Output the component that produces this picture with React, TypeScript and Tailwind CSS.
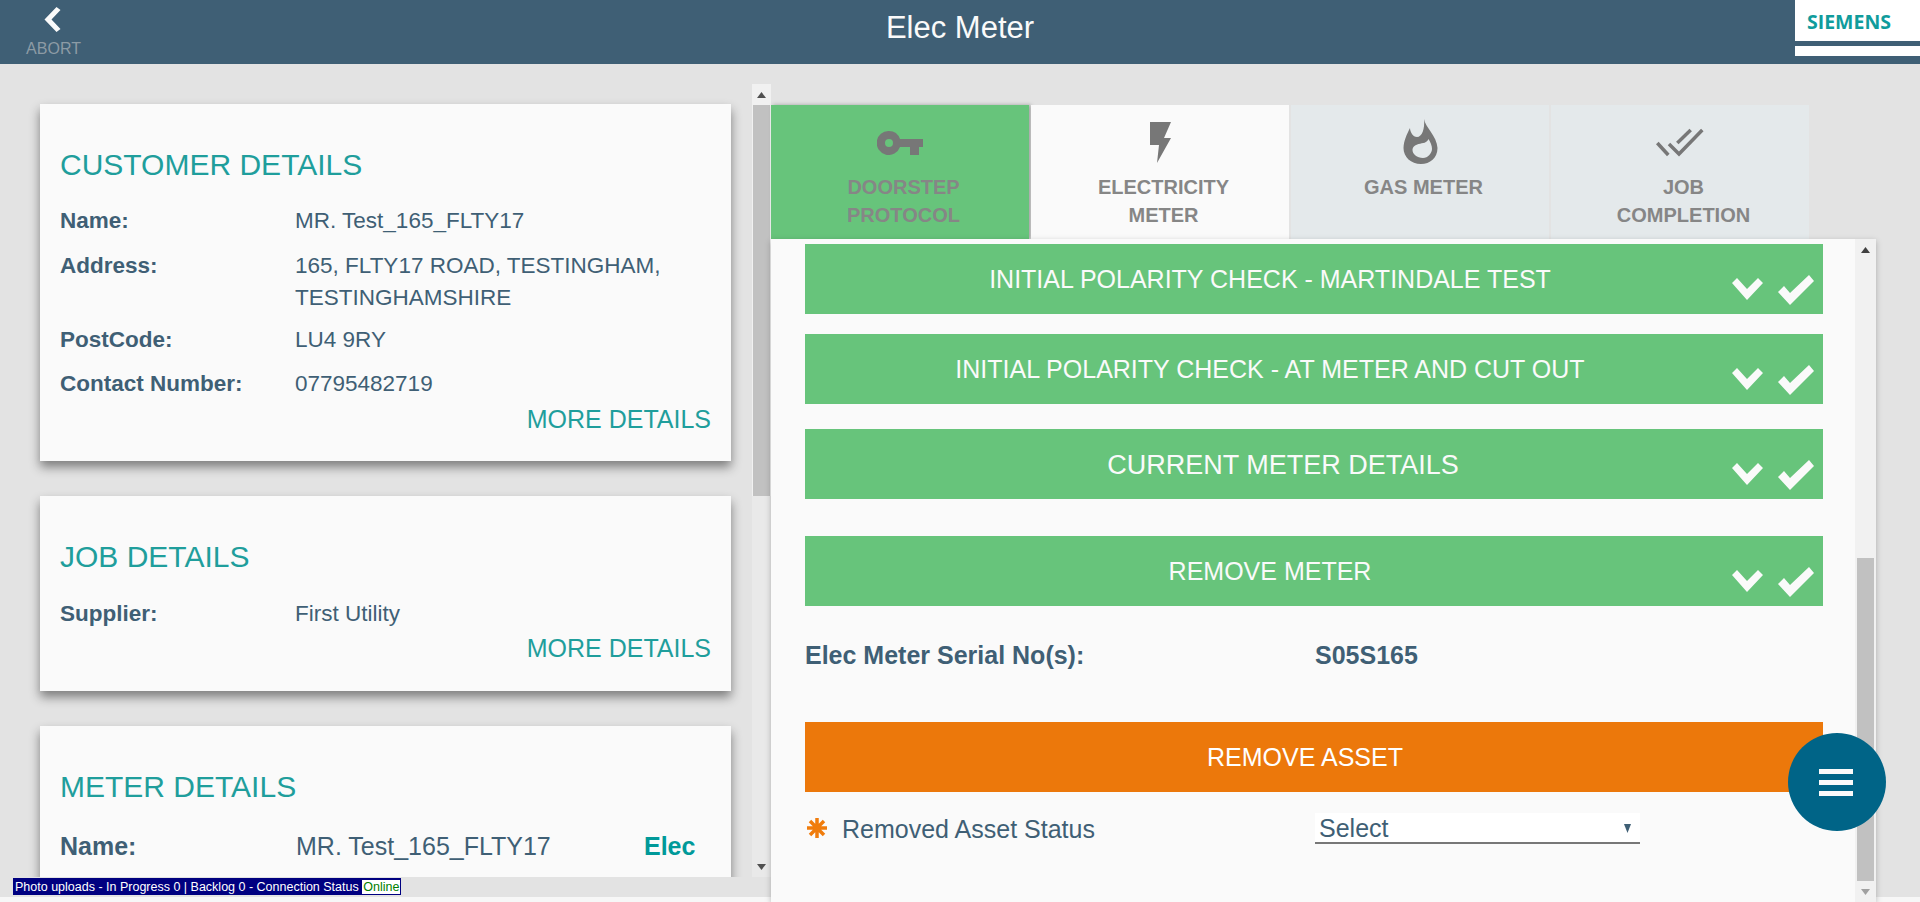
import React from "react";

const FONT = "font-['Liberation_Sans',Arial,sans-serif]";

function Check() {
  return (
    <svg className="absolute left-[926px] top-[31px]" width="84" height="32" viewBox="0 0 84 32" fill="#fafafa">
      <polygon points="1,8 6,3 16,14 27,3 32,8 16,25" />
      <polygon points="47,17 53,11 59,18 78,0 83,6 59,30" />
    </svg>
  );
}

function Row({ label, mb, pr, size }: { label: string; mb: string; pr: string; size: string }) {
  return (
    <div className={`relative flex h-[70px] w-[1018px] shrink-0 items-center justify-center bg-[#67c47b] pt-[2px] text-[#fafafa] ${size} ${mb} ${pr}`}>
      <span>{label}</span>
      <Check />
    </div>
  );
}

function Card({ title, children, cls }: { title: string; children: React.ReactNode; cls: string }) {
  return (
    <div className={`w-[691px] shrink-0 bg-[#fafafa] px-5 shadow-[0_6px_10px_rgba(0,0,0,0.45)] ${cls}`}>
      <div className="text-[30px] leading-[32px] text-[#1f9e9c]">{title}</div>
      {children}
    </div>
  );
}

function Info({ label, value, cls }: { label: string; value: React.ReactNode; cls: string }) {
  return (
    <div className={`flex text-[22.5px] leading-[32px] text-[#3f5f75] ${cls}`}>
      <div className="w-[235px] shrink-0 font-bold">{label}</div>
      <div className="w-[390px]">{value}</div>
    </div>
  );
}

function More({ cls }: { cls: string }) {
  return <div className={`text-right text-[25px] leading-[30px] text-[#1f9e9c] ${cls}`}>MORE DETAILS</div>;
}

function Tab({ bg, icon, lines, shadow }: { bg: string; icon: React.ReactNode; lines: string[]; shadow?: boolean }) {
  return (
    <div className={`flex h-[134px] w-[258px] flex-col items-center ${bg} ${shadow ? "shadow-[2px_0_4px_rgba(0,0,0,0.3)]" : ""}`}>
      <div className="flex h-[68px] w-full items-end justify-center">{icon}</div>
      <div className="pl-[7px] text-center text-[20px] font-bold leading-[28px] text-[#868686]">
        {lines.map((l) => (
          <div key={l}>{l}</div>
        ))}
      </div>
    </div>
  );
}

export default function App() {
  return (
    <div className={`h-[902px] w-[1920px] overflow-hidden bg-[#f7f7f7] ${FONT}`}>
      <header className="relative flex h-16 items-center justify-center bg-[#3f5f75] pb-2">
        <div className="absolute left-[27px] top-[7px] flex w-[53px] flex-col items-center">
          <svg width="18" height="25" viewBox="0 0 18 25" fill="#fafafa" className="-translate-x-[1.5px]">
            <polygon points="13,0 17,3 8,12.5 17,22 13,25 1,12.5" />
          </svg>
          <span className="mt-[8px] text-[16px] leading-[18px] text-[#8c9ba5]">ABORT</span>
        </div>
        <h1 className="text-[31px] text-[#fafafa]">Elec Meter</h1>
        <div className="absolute right-0 top-0 h-[56px] w-[125px] bg-white">
          <div className="pl-[12px] pt-[11px] font-['Open_Sans',sans-serif] text-[19.5px] font-bold leading-[22px] text-[#109c9c]">SIEMENS</div>
          <div className="mt-[8px] h-[5px] bg-[#3f5f75]" />
        </div>
      </header>

      <main className="relative flex h-[833px] bg-[#e3e3e3]">
        <div className="flex w-[771px] shrink-0 flex-col pt-5">
          <div className="flex h-[793px]">
            <div className="flex flex-1 flex-col overflow-hidden pl-10 pt-5">
              <Card title="CUSTOMER DETAILS" cls="h-[357px] pt-[45px]">
                <Info label="Name:" value="MR. Test_165_FLTY17" cls="mt-[24px]" />
                <Info label="Address:" value="165, FLTY17 ROAD, TESTINGHAM, TESTINGHAMSHIRE" cls="mt-[13px]" />
                <Info label="PostCode:" value="LU4 9RY" cls="mt-[10px]" />
                <Info label="Contact Number:" value="07795482719" cls="mt-[12px]" />
                <More cls="mt-[4px]" />
              </Card>
              <Card title="JOB DETAILS" cls="mt-[35px] h-[195px] pt-[45px]">
                <Info label="Supplier:" value="First Utility" cls="mt-[25px]" />
                <More cls="mt-[3px]" />
              </Card>
              <Card title="METER DETAILS" cls="mt-[35px] h-[300px] pt-[45px]">
                <div className="mt-[27px] flex text-[25px] leading-[32px] text-[#3f5f75]">
                  <div className="w-[236px] font-bold">Name:</div>
                  <div className="w-[348px]">MR. Test_165_FLTY17</div>
                  <div className="font-bold text-[#009999]">Elec</div>
                </div>
              </Card>
            </div>
            <div className="flex w-[19px] shrink-0 flex-col bg-[#f1f1f1]">
              <div className="flex h-[21px] items-center justify-center">
                <svg width="9" height="6" viewBox="0 0 9 6" fill="#505050"><polygon points="4.5,0 9,6 0,6" /></svg>
              </div>
              <div className="mx-[1px] h-[391px] bg-[#c1c1c1]" />
              <div className="flex-1 bg-[#e9e9e9]" />
              <div className="flex h-[21px] items-center justify-center bg-[#e9e9e9]">
                <svg width="9" height="6" viewBox="0 0 9 6" fill="#505050"><polygon points="0,0 9,0 4.5,6" /></svg>
              </div>
            </div>
          </div>
          <div className="h-5 bg-[#e3e3e3] pl-[13px] pt-px">
            <div className="flex h-[17px] w-[388px] items-center whitespace-nowrap bg-[#000080] px-[2px] text-[12.5px] leading-[14px] text-white">
              <span>Photo uploads - In Progress 0 | Backlog 0 - Connection Status&nbsp;</span>
              <span className="bg-white px-px text-[#008000]">Online</span>
            </div>
          </div>
        </div>

        <div className="flex w-[1105px] shrink-0 flex-col pt-[41px]">
          <div className="flex h-[134px] gap-[2px]">
            <Tab
              bg="bg-[#67c47b]"
              shadow
              lines={["DOORSTEP", "PROTOCOL"]}
              icon={
                <svg width="46" height="24" viewBox="0 0 46 24" fill="#777777" className="mb-[18px]">
                  <path fillRule="evenodd" d="M12 0a12 12 0 0 1 11 8h23v8h-4v8h-9v-8h-10a12 12 0 1 1-11-16zM12 8a4 4 0 1 0 0 8 4 4 0 0 0 0-8z" />
                </svg>
              }
            />
            <Tab
              bg="bg-[#fafafa]"
              lines={["ELECTRICITY", "METER"]}
              icon={
                <svg width="21" height="41" viewBox="0 0 21 41" fill="#777777" className="mb-[10px]">
                  <polygon points="0,0 21,0 14,16 21,16 7,41 9,23 0,23" />
                </svg>
              }
            />
            <Tab
              bg="bg-[#e4e9eb]"
              lines={["GAS METER"]}
              icon={
                <svg width="35" height="45" viewBox="0 0 35 45" fill="#777777" className="mb-[9px]">
                  <path
                    fillRule="evenodd"
                    d="M21 0C22 8 34 17 34.500 29C34.500 39 27 45 18 45C8 45 0.500 38 0.500 29C0.500 22 4 15 7 9C7 13 10 18 14 18C19 18 22 10 21 0ZM25.500 20C24 24 20 24 15.500 25C12 26 9.500 28 9.500 31C9.500 35 14 39 20 39C25 39 29 34 29 30C29 27 27.500 23 25.500 20Z"
                  />
                </svg>
              }
            />
            <Tab
              bg="bg-[#e4e9eb]"
              lines={["JOB", "COMPLETION"]}
              icon={
                <svg width="48" height="30" viewBox="0 0 48 30" fill="none" stroke="#777777" strokeWidth="3.5" className="mb-[15px]">
                  <path d="M1.300 15L12.300 27" />
                  <path d="M13 16L23 26L46.300 2" />
                  <path d="M21.300 15L34.700 2" />
                </svg>
              }
            />
          </div>

          <div className="relative flex h-[663px] shadow-[0_2px_6px_rgba(0,0,0,0.25)]">
            <div className="flex flex-1 flex-col bg-[#fafafa] pl-[34px] pt-[5px] text-[#3f5f75]">
              <Row label="INITIAL POLARITY CHECK - MARTINDALE TEST" mb="mb-[20px]" pr="pr-[88px]" size="text-[25px]" />
              <Row label="INITIAL POLARITY CHECK - AT METER AND CUT OUT" mb="mb-[25px]" pr="pr-[88px]" size="text-[25px]" />
              <Row label="CURRENT METER DETAILS" mb="mb-[37px]" pr="pr-[62px]" size="text-[27px]" />
              <Row label="REMOVE METER" mb="mb-[32px]" pr="pr-[88px]" size="text-[25px]" />
              <div className="flex h-[36px] items-center text-[25px] font-bold">
                <div className="w-[510px]">Elec Meter Serial No(s):</div>
                <div>S05S165</div>
              </div>
              <div className="mt-[48px] flex h-[70px] w-[1018px] items-center justify-center bg-[#ec780b] pr-[18px] pt-[2px] text-[25px] text-white">REMOVE ASSET</div>
              <div className="mt-[21px] flex h-[31px] items-start">
                <svg width="22" height="22" viewBox="0 0 22 22" stroke="#f07c0c" strokeWidth="3.5" className="ml-[1px] mt-[4px]">
                  <path d="M11 1v20M1 11h20M4 4l14 14M4 18L18 4" />
                  <circle cx="11" cy="11" r="4" fill="#f07c0c" stroke="none" />
                </svg>
                <div className="ml-[14px] w-[473px] text-[25px] leading-[32px]">Removed Asset Status</div>
                <div className="flex h-[31px] w-[325px] items-center justify-between border-b-2 border-[#777777] bg-white pl-[4px] pr-[9px] pt-[2px] text-[25px]">
                  <span>Select</span>
                  <svg width="7" height="9" viewBox="0 0 7 9" fill="#3f5f75"><polygon points="0,0 7,0 3.5,9" /></svg>
                </div>
              </div>
            </div>
            <div className="flex w-[21px] shrink-0 flex-col bg-[#f1f1f1]">
              <div className="flex h-[21px] items-center justify-center">
                <svg width="9" height="6" viewBox="0 0 9 6" fill="#404040"><polygon points="4.5,0 9,6 0,6" /></svg>
              </div>
              <div className="h-[298px]" />
              <div className="mx-[2px] h-[323px] bg-[#c1c1c1]" />
              <div className="flex h-[21px] items-center justify-center">
                <svg width="9" height="6" viewBox="0 0 9 6" fill="#a0a0a0"><polygon points="0,0 9,0 4.5,6" /></svg>
              </div>
            </div>
          </div>
        </div>

        <div className="absolute left-[1788px] top-[669px] flex h-[98px] w-[98px] flex-col items-center justify-center gap-[6px] rounded-full bg-[#006487]">
          <div className="-translate-x-px h-[5px] w-[34px] bg-[#fafafa]" />
          <div className="-translate-x-px h-[5px] w-[34px] bg-[#fafafa]" />
          <div className="-translate-x-px h-[5px] w-[34px] bg-[#fafafa]" />
        </div>
      </main>
    </div>
  );
}
